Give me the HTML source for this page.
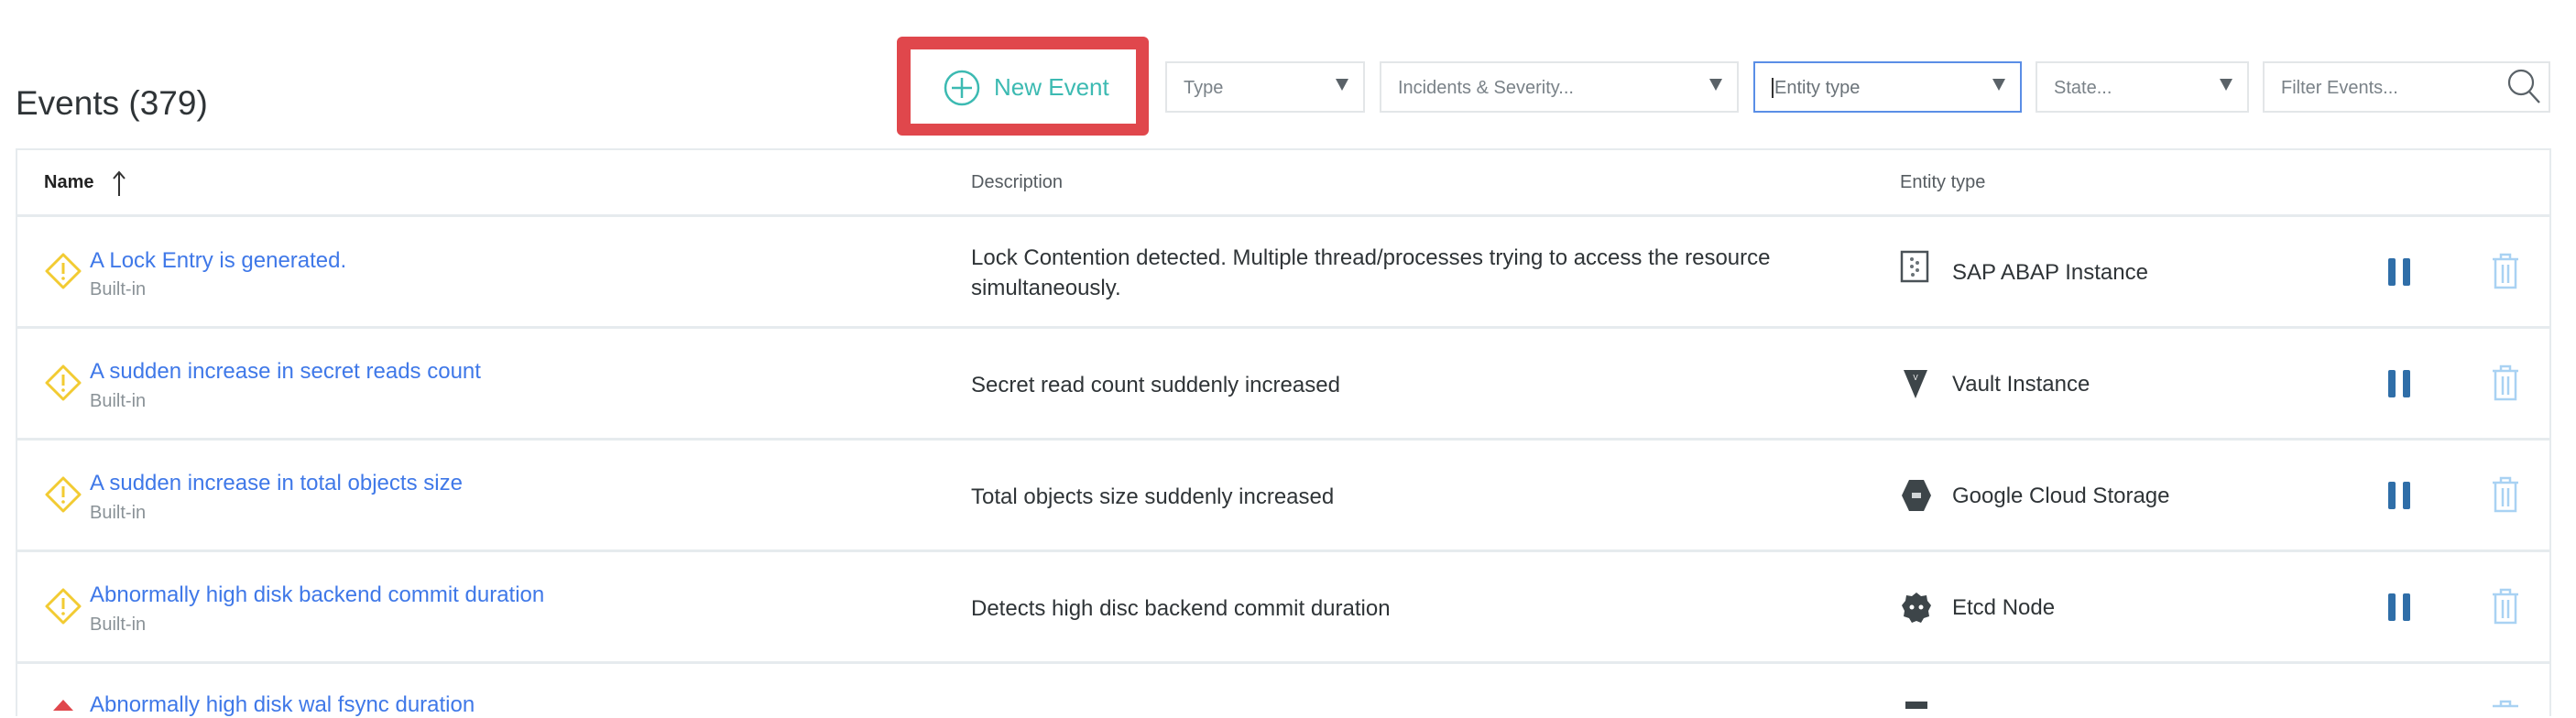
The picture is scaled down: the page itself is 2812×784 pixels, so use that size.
<!DOCTYPE html>
<html><head><meta charset="utf-8"><style>
*{margin:0;padding:0;box-sizing:border-box}
body{width:2812px;height:772px;background:#fff;font-family:"Liberation Sans",sans-serif;position:relative;overflow:hidden;color:#2f3437}
.a{position:absolute;white-space:nowrap}
.sel{position:absolute;top:67px;height:56px;border:2px solid #e3e6e8;background:#fff;font-size:20px;color:#7a8288;padding:17px 0 0 18px;line-height:20px}
.car{position:absolute;right:16px;top:17px;width:0;height:0;border-left:7px solid transparent;border-right:7px solid transparent;border-top:13px solid #5a6268}
.hl{position:absolute;left:18px;width:2766px;height:3px;background:#e6ebee}
.t{position:absolute;left:98px;font-size:24px;color:#3f78e8}
.b{position:absolute;left:98px;font-size:20px;color:#8a9297}
.d{position:absolute;left:1060px;font-size:24px;color:#2f3437;line-height:33px}
.e{position:absolute;left:2131px;font-size:24px;color:#2f3437}
.p{position:absolute;left:2607px;width:24px;height:30px}
.p:before,.p:after{content:"";position:absolute;top:0;width:8px;height:30px;background:#2f6ea8;border-radius:2px}
.p:before{left:0}.p:after{right:0}
</style></head><body>
<div class="a" style="left:17px;top:92px;font-size:37px;color:#2f3437">Events (379)</div>

<div class="a" style="left:979px;top:40px;width:275px;height:108px;background:#e0474c;border-radius:6px"></div>
<div class="a" style="left:994px;top:54px;width:246px;height:81px;background:#fff"></div>
<svg class="a" style="left:1030px;top:76px" width="40" height="40" viewBox="0 0 40 40"><circle cx="20" cy="20" r="18" fill="none" stroke="#3cbab2" stroke-width="2.5"/><path d="M20 9v22M9 20h22" stroke="#3cbab2" stroke-width="2.5"/></svg>
<div class="a" style="left:1085px;top:80px;font-size:26px;color:#3cbab2">New Event</div>

<div class="sel" style="left:1272px;width:218px">Type<span class="car"></span></div>
<div class="sel" style="left:1506px;width:392px">Incidents &amp; Severity...<span class="car"></span></div>
<div class="sel" style="left:1914px;width:293px;border-color:#5a8ee6;color:#6a7278"><span style="border-left:2px solid #333;padding-left:1px">Entity type</span><span class="car"></span></div>
<div class="sel" style="left:2222px;width:233px">State...<span class="car"></span></div>
<div class="sel" style="left:2470px;width:314px">Filter Events...
<svg style="position:absolute;right:6px;top:4px" width="42" height="42" viewBox="0 0 42 42"><circle cx="18" cy="17" r="13" fill="none" stroke="#5a6268" stroke-width="2.2"/><path d="M27 27l11 12" stroke="#5a6268" stroke-width="2.4"/></svg></div>

<div class="a" style="left:17px;top:162px;width:2768px;height:620px;border:2px solid #e6ebee;border-bottom:none"></div>
<div class="a" style="left:48px;top:188px;font-size:20px;font-weight:bold;color:#222">Name</div>
<svg class="a" style="left:122px;top:186px" width="16" height="28" viewBox="0 0 16 28"><path d="M8 2v26M2 9l6-7 6 7" fill="none" stroke="#333" stroke-width="2"/></svg>
<div class="a" style="left:1060px;top:188px;font-size:20px;color:#555b60">Description</div>
<div class="a" style="left:2074px;top:188px;font-size:20px;color:#555b60">Entity type</div>
<div class="hl" style="top:234px"></div>
<div class="hl" style="top:356px"></div>
<div class="hl" style="top:478px"></div>
<div class="hl" style="top:600px"></div>
<div class="hl" style="top:722px"></div>

<svg class="a" style="left:48px;top:275px" width="42" height="42" viewBox="0 0 42 42"><path d="M21 3L39 21 21 39 3 21Z" fill="none" stroke="#f2cb32" stroke-width="3" stroke-linejoin="round"/><path d="M21 12v12" stroke="#f2cb32" stroke-width="3"/><circle cx="21" cy="29" r="1.8" fill="#f2cb32"/></svg>
<div class="t" style="top:271px">A Lock Entry is generated.</div>
<div class="b" style="top:305px">Built-in</div>
<div class="d" style="top:265px">Lock Contention detected. Multiple thread/processes trying to access the resource<br>simultaneously.</div>
<svg class="a" style="left:2074px;top:273px" width="32" height="36" viewBox="0 0 32 36"><rect x="2" y="2" width="28" height="32" fill="none" stroke="#4a5257" stroke-width="2.5"/><g fill="#6a7277"><circle cx="13" cy="10" r="2"/><circle cx="19" cy="14" r="2"/><circle cx="13" cy="18" r="2"/><circle cx="19" cy="22" r="2"/><circle cx="14" cy="27" r="2"/></g></svg>
<div class="e" style="top:284px">SAP ABAP Instance</div>
<div class="p" style="top:282px"></div>

<svg class="a" style="left:48px;top:397px" width="42" height="42" viewBox="0 0 42 42"><path d="M21 3L39 21 21 39 3 21Z" fill="none" stroke="#f2cb32" stroke-width="3" stroke-linejoin="round"/><path d="M21 12v12" stroke="#f2cb32" stroke-width="3"/><circle cx="21" cy="29" r="1.8" fill="#f2cb32"/></svg>
<div class="t" style="top:392px">A sudden increase in secret reads count</div>
<div class="b" style="top:427px">Built-in</div>
<div class="d" style="top:404px">Secret read count suddenly increased</div>
<svg class="a" style="left:2076px;top:402px" width="30" height="34" viewBox="0 0 30 34"><path d="M2 2h26L15 33Z" fill="#3d4549"/><text x="15" y="13" font-size="8" fill="#fff" text-anchor="middle" font-family="Liberation Sans">V</text></svg>
<div class="e" style="top:406px">Vault Instance</div>
<div class="p" style="top:404px"></div>

<svg class="a" style="left:48px;top:519px" width="42" height="42" viewBox="0 0 42 42"><path d="M21 3L39 21 21 39 3 21Z" fill="none" stroke="#f2cb32" stroke-width="3" stroke-linejoin="round"/><path d="M21 12v12" stroke="#f2cb32" stroke-width="3"/><circle cx="21" cy="29" r="1.8" fill="#f2cb32"/></svg>
<div class="t" style="top:514px">A sudden increase in total objects size</div>
<div class="b" style="top:549px">Built-in</div>
<div class="d" style="top:526px">Total objects size suddenly increased</div>
<svg class="a" style="left:2075px;top:523px" width="34" height="36" viewBox="0 0 34 36"><path d="M9 1h16l8 17-8 17H9L1 18Z" fill="#3d4549"/><rect x="12" y="15" width="10" height="6" fill="#d0d4d6"/></svg>
<div class="e" style="top:528px">Google Cloud Storage</div>
<div class="p" style="top:526px"></div>

<svg class="a" style="left:48px;top:641px" width="42" height="42" viewBox="0 0 42 42"><path d="M21 3L39 21 21 39 3 21Z" fill="none" stroke="#f2cb32" stroke-width="3" stroke-linejoin="round"/><path d="M21 12v12" stroke="#f2cb32" stroke-width="3"/><circle cx="21" cy="29" r="1.8" fill="#f2cb32"/></svg>
<div class="t" style="top:636px">Abnormally high disk backend commit duration</div>
<div class="b" style="top:671px">Built-in</div>
<div class="d" style="top:648px">Detects high disc backend commit duration</div>
<svg class="a" style="left:2075px;top:645px" width="34" height="38" viewBox="0 0 34 38"><path d="M17 2l5 4 6-1 1 6 4 5-3 6 1 6-6 2-3 5-5-2-5 2-3-5-6-2 1-6-3-6 4-5 1-6 6 1Z" fill="#3d4549"/><circle cx="12" cy="18" r="2.5" fill="#fff"/><circle cx="22" cy="18" r="2.5" fill="#fff"/></svg>
<div class="e" style="top:650px">Etcd Node</div>
<div class="p" style="top:648px"></div>

<svg class="a" style="left:2718px;top:275px" width="34" height="42" viewBox="0 0 34 42"><path d="M3 8h28M12 8V3h10v5M6 8v31h22V8M14 14v20M20 14v20" fill="none" stroke="#a9d2f3" stroke-width="2.5"/></svg>
<svg class="a" style="left:2718px;top:397px" width="34" height="42" viewBox="0 0 34 42"><path d="M3 8h28M12 8V3h10v5M6 8v31h22V8M14 14v20M20 14v20" fill="none" stroke="#a9d2f3" stroke-width="2.5"/></svg>
<svg class="a" style="left:2718px;top:519px" width="34" height="42" viewBox="0 0 34 42"><path d="M3 8h28M12 8V3h10v5M6 8v31h22V8M14 14v20M20 14v20" fill="none" stroke="#a9d2f3" stroke-width="2.5"/></svg>
<svg class="a" style="left:2718px;top:641px" width="34" height="42" viewBox="0 0 34 42"><path d="M3 8h28M12 8V3h10v5M6 8v31h22V8M14 14v20M20 14v20" fill="none" stroke="#a9d2f3" stroke-width="2.5"/></svg>

<svg class="a" style="left:56px;top:762px" width="26" height="14" viewBox="0 0 26 14"><path d="M13 2L24 14H2Z" fill="#e0474c"/></svg>
<div class="t" style="top:756px">Abnormally high disk wal fsync duration</div>
<svg class="a" style="left:2078px;top:764px" width="28" height="10"><rect x="2" y="2" width="24" height="8" fill="#3d4549"/></svg>
<svg class="a" style="left:2718px;top:763px" width="34" height="12" viewBox="0 0 34 12"><path d="M12 8V3h10v5M3 8h28" fill="none" stroke="#a9d2f3" stroke-width="2.5"/></svg>
</body></html>
